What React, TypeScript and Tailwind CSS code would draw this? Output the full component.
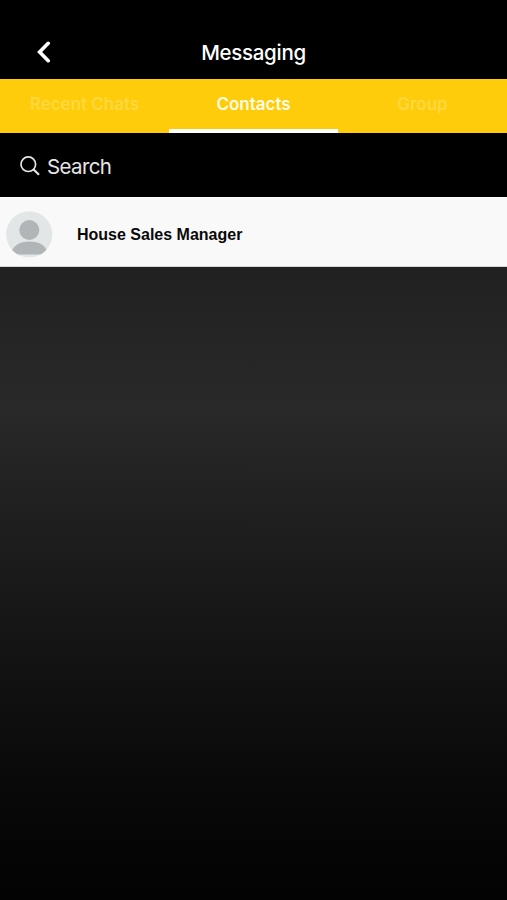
import React from "react";

interface TabItem {
  label: string;
  active?: boolean;
}

interface Contact {
  name: string;
}

const tabs: TabItem[] = [
  { label: "Recent Chats" },
  { label: "Contacts", active: true },
  { label: "Group" },
];

const contacts: Contact[] = [{ name: "House Sales Manager" }];

const Header: React.FC = () => (
  <header className="grid h-[79px] grid-cols-[1fr_auto_1fr] items-end bg-black pb-[10px]">
    <button className="ml-[37px] flex h-[34px] w-8 items-center" aria-label="Back">
      <svg width="14" height="22" viewBox="0 0 14 22" fill="none">
        <path
          d="M11.2 2.3 2.6 11l8.6 8.7"
          stroke="white"
          strokeWidth="3.6"
          strokeLinecap="round"
        />
      </svg>
    </button>
    <h1 className="text-[20.5px] leading-8 font-medium tracking-[-0.015em] text-white">
      Messaging
    </h1>
  </header>
);

const Tabs: React.FC = () => (
  <nav className="grid h-[54px] grid-cols-3 bg-[#fecc0a]">
    {tabs.map(({ label, active }) => (
      <button
        key={label}
        className={
          active
            ? "border-b-4 border-white pt-[2px] text-[17px] font-semibold text-[#fffce6]"
            : "border-b-4 border-transparent pt-[2px] text-[17px] font-semibold text-[#ffd83f]"
        }
      >
        {label}
      </button>
    ))}
  </nav>
);

const SearchBar: React.FC = () => (
  <div className="flex h-16 items-center bg-black pt-[2px] pl-5 text-[#e6e6e6]">
    <svg width="20" height="20" viewBox="0 0 20 20" fill="none" stroke="currentColor">
      <circle cx="8.3" cy="8.2" r="7.3" strokeWidth="1.7" />
      <path d="m13.6 13.5 5.4 5.2" strokeWidth="2.2" />
    </svg>
    <span className="ml-[7px] pt-[2px] text-[20.5px] tracking-[-0.03em]">Search</span>
  </div>
);

const Avatar: React.FC = () => (
  <svg width="47" height="47" viewBox="0 0 47 47">
    <defs>
      <clipPath id="avatar">
        <circle cx="23.2" cy="23.3" r="23.1" />
      </clipPath>
    </defs>
    <g clipPath="url(#avatar)">
      <rect width="47" height="47" fill="#e2e6e7" />
      <circle cx="23.3" cy="19" r="10" fill="#b0b6b8" />
      <path d="M5 43.5C5.5 35 14 30.5 23.5 30.5S41.5 35 42 43.5Z" fill="#b0b6b8" />
    </g>
  </svg>
);

const ContactRow: React.FC<{ contact: Contact }> = ({ contact }) => (
  <li className="flex h-[70px] items-center border-y border-t-white border-b-[#d5d8d8] bg-[#f9f9f9] pt-[5px] pl-[6px]">
    <Avatar />
    <span className="ml-6 font-['Liberation_Sans'] text-[16px] font-bold text-[#090909]">
      {contact.name}
    </span>
  </li>
);

export default function App() {
  return (
    <div className="flex h-screen flex-col overflow-hidden bg-black font-['Inter',sans-serif]">
      <Header />
      <Tabs />
      <SearchBar />
      <main className="flex-1 bg-linear-to-b from-[#1d1d1d] via-[#292929] via-30% to-[#030303]">
        <ul>
          {contacts.map((contact) => (
            <ContactRow key={contact.name} contact={contact} />
          ))}
        </ul>
      </main>
    </div>
  );
}
